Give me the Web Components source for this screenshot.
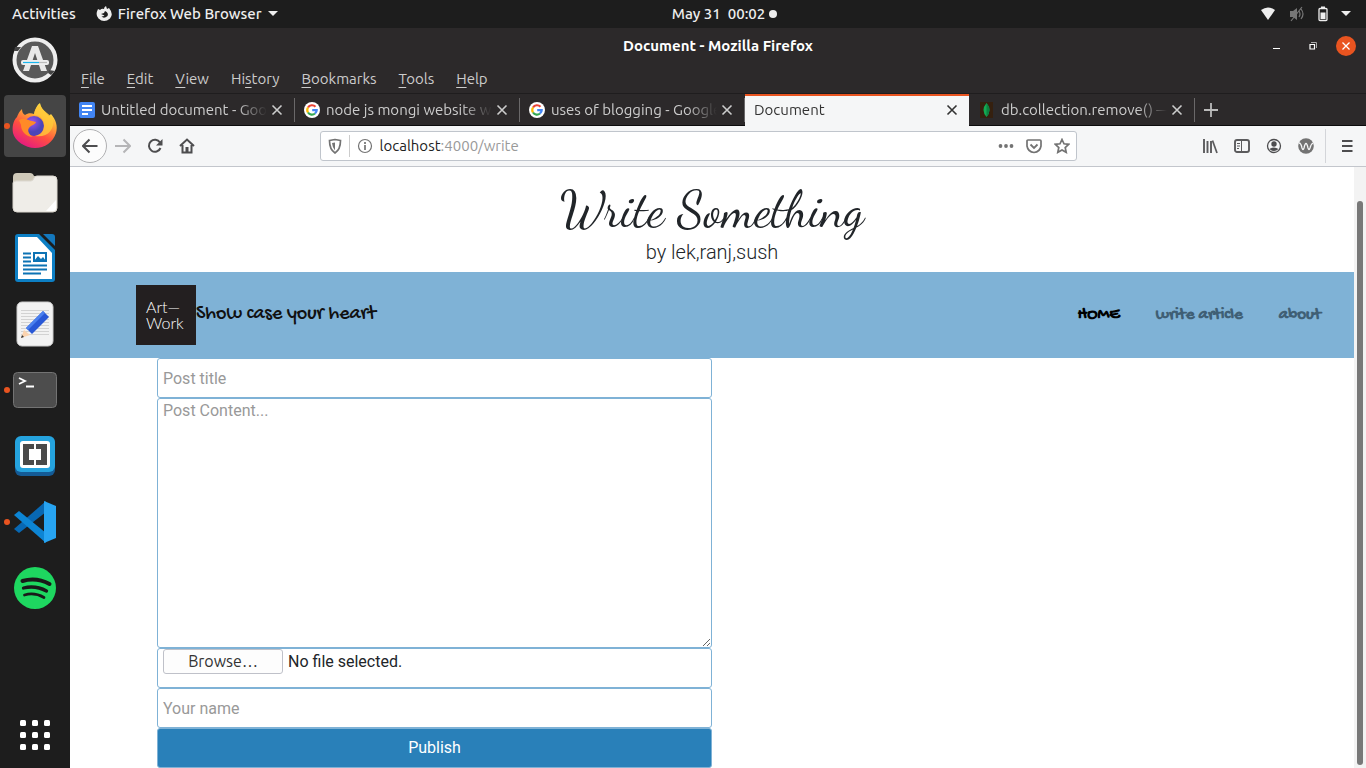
<!DOCTYPE html>
<html lang="en">
<head>
<meta charset="utf-8">
<meta name="viewport" content="width=device-width, initial-scale=1">
<title>Document - Mozilla Firefox</title>
<style>
html,body{margin:0;background:#1d1d1d}
body{font-family:Ubuntu,"Noto Sans",sans-serif;font-size:15px;line-height:20px;color:#fff}
</style>
</head>
<body>
<desktop-shell>
  <top-panel slot="panel"></top-panel>
  <app-dock slot="dock">
    <dock-item label="Software Updater" icon="updater"></dock-item>
    <dock-item label="Firefox" icon="firefox" running active></dock-item>
    <dock-item label="Files" icon="files"></dock-item>
    <dock-item label="Writer" icon="writer"></dock-item>
    <dock-item label="Text Editor" icon="editor"></dock-item>
    <dock-item label="Terminal" icon="terminal" running></dock-item>
    <dock-item label="Brackets" icon="brackets"></dock-item>
    <dock-item label="Visual Studio Code" icon="vscode" running></dock-item>
    <dock-item label="Spotify" icon="spotify"></dock-item>
    <dock-item slot="end" label="Show Applications" icon="apps"></dock-item>
  </app-dock>
  <browser-window>
    <title-bar slot="chrome">Document - Mozilla Firefox</title-bar>
    <menu-bar slot="chrome"></menu-bar>
    <tab-strip slot="chrome">
      <browser-tab icon="docs">Untitled document - Goog</browser-tab>
      <browser-tab icon="google">node js mongi website wi</browser-tab>
      <browser-tab icon="google">uses of blogging - Google</browser-tab>
      <browser-tab active>Document</browser-tab>
      <browser-tab icon="mongo">db.collection.remove() —</browser-tab>
    </tab-strip>
    <nav-toolbar slot="chrome"></nav-toolbar>
    <page-header>
      <span slot="title">Write Something</span>
      <span slot="byline">by lek,ranj,sush</span>
    </page-header>
    <site-nav></site-nav>
    <post-form></post-form>
  </browser-window>
</desktop-shell>

<script>
const ICONS = {
updater:[46,46,`<circle cx="23" cy="23" r="20.5" fill="#595959" stroke="#eee" stroke-width="4"/><path d="M3 10h6l-3 4H2zM37 33l6 1-4 4-3-2z" fill="#444"/><path d="M20 9h6l9 25h-6l-6-18-6 18h-6z" fill="#e8e8e8"/><rect x="9" y="23" width="28" height="5" rx="2" fill="#eee"/><path d="M11 25.500h16" stroke="#19b6ee" stroke-width="1.200"/><path d="M27 25.500h8" stroke="#bbb" stroke-width="1.200"/>`],
firefox:[48,48,`<defs><linearGradient id="f" x1=".8" y1="0" x2=".25" y2="1"><stop offset=".05" stop-color="#fff44f"/><stop offset=".35" stop-color="#ffa436"/><stop offset=".62" stop-color="#ff5040"/><stop offset="1" stop-color="#e31587"/></linearGradient><radialGradient id="p" cx=".4" cy=".3"><stop offset="0" stop-color="#a050ef"/><stop offset="1" stop-color="#4a45b8"/></radialGradient></defs><path d="M6 15c2-5 3-6 5-8 0 3 1 5 3 6 3-2 6-2 9-1 1-5 3-9 6-11 1 6 5 8 9 13l2-2c5 6 7 12 5 19-3 9-11 15-21 15S4 39 2 31c-1-6 0-12 4-16z" fill="url(#f)"/><circle cx="23" cy="24" r="10" fill="url(#p)"/><path d="M8 18c5-3 9 0 13 1l4 1c-1 3-5 3-7 6-2 2 0 7 4 9-7 0-12-6-12-12z" fill="#ff8a27"/><path d="M29 2c-4 3-6 7-6 11 6 0 10 4 10 10 0 7-4 10-9 11 12 2 20-6 18-17-2-5-12-8-13-15z" fill="#ffc93a" opacity=".8"/>`],
files:[46,42,`<path d="M1 6a4 4 0 0 1 4-4h13q3 0 4 3h19q4 0 4 4v20H1z" fill="#cfc9b9"/><path d="M1 12q0-2 3-2h15q2 0 3-3 1-2 3-2h16q4 0 4 4v28q0 4-4 4H5q-4 0-4-4z" fill="#efede8" stroke="#dcd8d0"/><path d="M34 40L44 29v8q0 3-3 3z" fill="#fff"/>`],
writer:[42,50,`<path d="M4 1h21l16 16v29a3 3 0 0 1-3 3H4a3 3 0 0 1-3-3V4a3 3 0 0 1 3-3z" fill="#0d7fc4"/><path d="M4 4h19l15 16v26H4z" fill="#fff"/><path d="M29 1h9q3 0 3 3v9z" fill="#1478bd"/><path d="M9 20.500h8m-8 4h8m-8 4h8m-8 4h24m-24 4h24m-24 4h18" stroke="#0d73b4" stroke-width="2"/><path d="M20 20h12v8H20z" fill="#fff" stroke="#0d73b4" stroke-width="2"/><path d="M20 28l4-5 3 3 2-2 3 4z" fill="#0d73b4"/>`],
editor:[40,48,`<rect x="2" y="2" width="36" height="44" rx="5" fill="#f2f2f2" stroke="#ccc"/><path d="M6 10.500h28M6 13.500h28M6 16.500h28M6 19.500h28M6 22.500h28M6 25.500h28M6 28.500h28M6 31.500h28M6 34.500h28" stroke="#d2d2d2"/><path d="M6 38l3-8 6 5z" fill="#fbd3ae"/><path d="M6 38l1-3 2 2z" fill="#333"/><path d="M11 28L28 11l6 6-17 17z" fill="#2958d6"/><path d="M11 28L28 11l2 2-17 17z" fill="#4b80ee"/>`],
terminal:[46,38,`<rect x="1.500" y="1.500" width="43" height="35" rx="4" fill="#4d4d4d" stroke="#737373"/><path d="M7 7l6 3-6 3M14 15.500h8" fill="none" stroke="#fff" stroke-width="1.800"/>`],
brackets:[42,42,`<rect x="1" y="2" width="40" height="39" rx="6" fill="#145b96"/><rect x="1" y="1" width="40" height="36" rx="6" fill="#25a3de"/><rect x="6" y="6" width="30" height="27" rx="3" fill="#fff"/><path d="M9 9h11v5h-5v11h5v5H9zm13 0h11v21H22v-5h5V14h-5z" fill="#4a4a4a"/>`],
vscode:[44,44,`<path d="M1 29l5 4L33 12V1L1 29z" fill="#0868b3"/><path d="M1 15l5-4 27 22v10z" fill="#0d85d4"/><path d="M31 1l12 5v32l-12 5z" fill="#27a4f2"/>`],
spotify:[44,44,`<circle cx="22" cy="22" r="21" fill="#1ed760"/><g fill="none" stroke="#191919" stroke-linecap="round"><path d="M9.500 15q14-4 27 3" stroke-width="4"/><path d="M10.500 22q12-3 23 3" stroke-width="3.300"/><path d="M11.500 29q10-3 19.500 2.500" stroke-width="2.700"/></g>`],
apps:[30,30,[0,12,24].map(y=>[0,12,24].map(x=>`<rect x="${x}" y="${y}" width="6" height="6" rx="1.500" fill="#fff"/>`).join('')).join('')],
fox:[16,16,`<path d="M2 3l2 1q2-2 4-1 0-2 2-3l1 3 2-1q5 6 1 10.500-6 5-11.500 0Q-1 9 2 3z" fill="#eee"/><path d="M5 8l3-1 1-2q4 2 2.500 5Q8 13 5.500 10.500q2 0 3-1z" fill="#1d1d1d"/>`],
caret:[10,6,`<path d="M0 0h10L5 5z" fill="#eee"/>`],
wifi:[16,14,`<path d="M1 3q7-5 14 0L8 13z" fill="#eee"/>`],
mute:[16,16,`<path d="M1 5h3l4-3v12l-4-3H1z" fill="#777"/><path d="M10 5q2 3 0 6m2-8q4 5 0 10M2 15L13 1" fill="none" stroke="#777" stroke-width="1.200"/>`],
battery:[10,16,`<rect x="1" y="2.500" width="8" height="12" rx="1" fill="none" stroke="#eee" stroke-width="1.300"/><path d="M3 .500h4v2H3zM2.500 6.500h5V13h-5z" fill="#eee"/>`],
min:[8,8,`<path d="M0 6.500h7" stroke="#fff"/>`],
restore:[8,8,`<path d="M1 2.500h4.500V7H1z" fill="none" stroke="#fff" stroke-width="1.200"/><path d="M2 .500h5.500V6" fill="none" stroke="#aaa"/>`],
x:[16,16,`<path d="M3.500 3.500l9 9m0-9l-9 9" stroke="currentColor" stroke-width="1.600"/>`],
closewin:[10,10,`<path d="M1.500 1.500l7 7m0-7l-7 7" stroke="#fff" stroke-width="1.300"/>`],
plus:[16,16,`<path d="M8 1v14M1 8h14" stroke="#bbb" stroke-width="1.800"/>`],
docs:[16,16,`<rect width="16" height="16" rx="2" fill="#4285f4"/><path d="M3 4h10M3 8h10M3 12h6" stroke="#fff" stroke-width="1.800"/>`],
google:[16,16,`<circle cx="8" cy="8" r="8" fill="#fff"/><g fill="none" stroke-width="2.200"><path d="M4 5.500A4.700 4.700 0 0 1 11.500 4.800" stroke="#ea4335"/><path d="M4 10.500a4.700 4.700 0 0 1 0-5" stroke="#fbbc05"/><path d="M4 10.500a4.700 4.700 0 0 0 7 1" stroke="#34a853"/><path d="M11 11.500q1.700-1.500 1.700-3.300H8.200" stroke="#4285f4"/></g>`],
mongo:[16,16,`<path d="M1 0h13v16H1z" fill="#35200f"/><path d="M7.500 1q6 7 0 14-6-7 0-14z" fill="#13aa52"/><path d="M7.500 1q6 7 0 14z" fill="#0d8040"/>`],
back:[16,16,`<path d="M15.500 8H1m6.500-6.500L1 8l6.500 6.500" fill="none" stroke="#4d4d4f" stroke-width="2"/>`],
fwd:[16,16,`<path d="M0 8h15M8.500 1.500L15 8l-6.500 6.500" fill="none" stroke="#b5b5b7" stroke-width="2"/>`],
reload:[16,16,`<path d="M13 4.500A6 6 0 1 0 13.500 10" fill="none" stroke="#4d4d4f" stroke-width="2"/><path d="M15.500 1v6.500H9z" fill="#4d4d4f"/>`],
home:[16,16,`<path d="M1 8l7-6.500L15 8M3.500 7v7.500h9V7" fill="none" stroke="#4d4d4f" stroke-width="2"/><path d="M6.500 9h3v5.500h-3z" fill="#4d4d4f"/>`],
shield:[16,16,`<path d="M8 1.500q3 .500 5.500 1 0 9-5.500 12.500-5.500-3.500-5.500-12.500Q5 2 8 1.500z" fill="none" stroke="#737373" stroke-width="1.700"/><path d="M8 4.500v8Q5.500 10 5 5z" fill="#737373"/>`],
info:[16,16,`<circle cx="8" cy="8" r="6.500" fill="none" stroke="#737373" stroke-width="1.200"/><path d="M8 4v2m0 1v5" stroke="#737373" stroke-width="1.700"/>`],
dots:[16,16,`<g fill="#737373"><circle cx="2.500" cy="8" r="1.900"/><circle cx="8" cy="8" r="1.900"/><circle cx="13.500" cy="8" r="1.900"/></g>`],
pocket:[16,16,`<path d="M2 2h12q1 0 1 1v5q-1 6-7 6.500Q2 14 1 8V3q0-1 1-1z" fill="none" stroke="#737373" stroke-width="1.700"/><path d="M4.500 6.500L8 10l3.500-3.500" fill="none" stroke="#737373" stroke-width="1.800"/>`],
star:[16,16,`<path d="M8 1.500l2 4.300 4.700.500-3.500 3.200 1 4.800L8 12l-4.200 2.300 1-4.800L1.300 6.300 6 5.800z" fill="none" stroke="#737373" stroke-width="1.700"/>`],
library:[16,16,`<path d="M2 1v14M5.500 3v12M9 3v12" stroke="#5b5b5d" stroke-width="1.900"/><path d="M10.500 2.500L15 15" stroke="#5b5b5d" stroke-width="1.700"/>`],
sidebar:[16,16,`<rect x="1" y="2" width="14" height="12" rx="2" fill="none" stroke="#5b5b5d" stroke-width="1.900"/><path d="M7.500 2v12M3 5.500h3M3 8h3M3 10.500h2" stroke="#5b5b5d"/>`],
account:[16,16,`<circle cx="8" cy="8" r="6.500" fill="none" stroke="#4d4d4f" stroke-width="1.300"/><circle cx="8" cy="6" r="2.700" fill="#4d4d4f"/><path d="M3.500 11q4.500-3 9 0-4.500 4-9 0z" fill="#4d4d4f"/>`],
wave:[16,16,`<circle cx="8" cy="8" r="7.800" fill="#737373"/><path d="M1 5q2 0 3 5 1 3 2 0 2-9 4 0 1 3 2 0 1-4 3-5" fill="none" stroke="#f5f6f7" stroke-width="1.300"/>`],
menu:[16,16,`<path d="M3 3h10.500M3 8h10.500M3 13h10.500" stroke="#4d4d4f" stroke-width="1.800"/>`]
};
const icon = n => { const [w,h,b]=ICONS[n]; return `<svg width="${w}" height="${h}" viewBox="0 0 ${w} ${h}" aria-hidden="true">${b}</svg>`; };
const BASE = `:host,*{box-sizing:border-box}svg{display:block;flex:none}button{font:inherit;color:inherit;border:0;background:none;padding:0;margin:0;display:flex;align-items:center;justify-content:center}`;
function define(name, css, html){
  customElements.define(name, class extends HTMLElement{
    constructor(){
      super();
      const root=this.attachShadow({mode:'open'});
      root.innerHTML=`<style>${BASE}${css}</style>${typeof html==='function'?html(this):html}`;
    }
  });
}

define('desktop-shell',`
:host{display:grid;grid-template-columns:70px minmax(0,1fr);grid-template-rows:28px 1fr;min-height:100vh;background:#1d1d1d}
slot[name=panel]::slotted(*){grid-column:1/-1}`,
`<slot name="panel"></slot><slot name="dock"></slot><slot></slot>`);

define('top-panel',`
:host{display:flex;align-items:center;padding:0 15px 0 12px;color:#eee;font-weight:500}
.side{display:flex;align-items:center;flex:1}
.right{justify-content:flex-end;gap:13px}
.app{margin-left:20px;gap:6px}
.clock{margin-left:86px;gap:4px;white-space:pre}
i{width:8px;height:8px;border-radius:50%;background:#eee}`,
`<div class="side"><button>Activities</button><button class="app">${icon('fox')}Firefox Web Browser${icon('caret')}</button></div>
<button class="clock">May 31  00:02<i></i></button>
<div class="side right">${icon('wifi')}${icon('mute')}${icon('battery')}${icon('caret')}</div>`);

define('app-dock',`:host{display:flex;flex-direction:column;align-items:center;gap:4px;padding:1px 0 2px}
.gap{flex:1}`,`<slot></slot><div class="gap"></div><slot name="end"></slot>`);

define('dock-item',`
:host{display:block;position:relative;width:62px;height:62px;flex:none}
button{width:100%;height:100%;border-radius:4px}
:host([active]) button{background:#454545}
:host([running])::before{content:"";position:absolute;left:0;top:28px;width:6px;height:6px;border-radius:50%;background:#e95420}`,
e=>`<button aria-label="${e.getAttribute('label')}">${icon(e.getAttribute('icon'))}</button>`);

define('browser-window',`
:host{display:flex;flex-direction:column;background:#fff;min-width:0}
.view{flex:1;display:grid;grid-template-columns:minmax(0,1fr) 12px;color:#212529}
.bar{background:#f3f3f3;display:flex;flex-direction:column;padding:34px 3px 3px}
.thumb{flex:1;border-radius:3px;background:#787878}`,
`<slot name="chrome"></slot><div class="view"><main><slot></slot></main><div class="bar"><div class="thumb"></div></div></div>`);

define('title-bar',`
:host{display:grid;grid-template-columns:1fr auto 1fr;align-items:center;height:36px;background:#2c292a;font-weight:700}
h1{font:inherit;margin:0;grid-column:2}
.b{display:flex;justify-content:flex-end;align-items:center;gap:10px;padding-right:10px}
button{width:26px;height:20px}
button.c{width:20px;border-radius:50%;background:#e95420}`,
`<h1><slot></slot></h1><div class="b"><button aria-label="Minimize">${icon('min')}</button><button aria-label="Restore">${icon('restore')}</button><button class="c" aria-label="Close">${icon('closewin')}</button></div>`);

define('menu-bar',`
:host{display:flex;height:30px;background:#2c292a;border-bottom:1px solid #1f1d1e;color:#ccc;gap:22px;padding:0 11px}
u{text-underline-offset:3px}`,
['File','Edit','View','Hi_story','Bookmarks','Tools','Help'].map(t=>{
 const p=t.indexOf('_'); return p<0?`<button><span><u>${t[0]}</u>${t.slice(1)}</span></button>`:`<button><span>${t.slice(0,p)}<u>${t[p+1]}</u>${t.slice(p+2)}</span></button>`;}).join(''));

define('tab-strip',`
:host{display:flex;height:32px;background:#2c292a;border-bottom:1px solid #0c0c0d}
.tabs{display:flex;flex:0 1 1125px;min-width:0}
button{width:32px;flex:none}`,
`<div class="tabs"><slot></slot></div><button aria-label="New tab">${icon('plus')}</button>`);

define('browser-tab',`
:host{display:flex;flex:1;min-width:0;align-items:center;gap:6px;padding:0 10px 0 9px;color:#ccc;
 background:linear-gradient(#6a6869,#6a6869) 100% 4px/1px 24px no-repeat}
:host([active]){background:#f5f6f7;color:#333;border-top:2px solid #e95420;margin:0 1px -1px 0;padding:0 9px 2px}
.t{flex:1;white-space:nowrap;overflow:hidden;-webkit-mask:linear-gradient(to left,transparent,#000 30px);mask:linear-gradient(to left,transparent,#000 30px)}
button{margin-left:-4px}`,
e=>`${e.hasAttribute('icon')?icon(e.getAttribute('icon')):''}<span class="t"><slot></slot></span><button aria-label="Close tab">${icon('x')}</button>`);

define('nav-toolbar',`
:host{display:flex;align-items:center;height:41px;padding:0 3px;background:#f5f6f7;border-bottom:1px solid #c3c6cc;color:#333}
button{width:32px;height:32px;flex:none}
.back{width:34px;height:34px;border:1px solid #b0b0b2;border-radius:50%;background:#fcfcfc}
.sp{flex:117 1 0}
.url{flex:753 1 0;display:flex;align-items:center;height:30px;border:1px solid #c0c5cc;border-radius:3px;background:#fff;padding:0 0 0 6px;min-width:0}
.url button{width:28px;height:28px}
.url .s{width:16px}
.url .i{width:31px;border-left:1px solid #ccc;margin-left:6px;height:22px}
.addr{position:relative;flex:1;display:grid;min-width:0}
.addr>*{grid-area:1/1;font:inherit;line-height:22px;padding:0;margin:0;border:0}
input{color:transparent;background:none;caret-color:#333;outline:0;min-width:0}
.addr span{color:#999;pointer-events:none}b{font-weight:400;color:#222}
.sep{width:1px;height:34px;background:#d3d5d9;margin:0 5px 0 3px}`,
`<button class="back" aria-label="Back">${icon('back')}</button><button aria-label="Forward">${icon('fwd')}</button><button aria-label="Reload">${icon('reload')}</button><button aria-label="Home">${icon('home')}</button>
<div class="sp"></div><div class="url"><button class="s" aria-label="Protection">${icon('shield')}</button><button class="i" aria-label="Site information">${icon('info')}</button>
<div class="addr"><input aria-label="Address"><span><b>localhost</b>:4000/write</span></div>
<button aria-label="Page actions">${icon('dots')}</button><button aria-label="Save to Pocket">${icon('pocket')}</button><button aria-label="Bookmark">${icon('star')}</button></div><div class="sp"></div>
<button aria-label="Library">${icon('library')}</button><button aria-label="Sidebars">${icon('sidebar')}</button><button aria-label="Account">${icon('account')}</button><button aria-label="Extension">${icon('wave')}</button><div class="sep"></div><button aria-label="Menu">${icon('menu')}</button>`);

define('page-header',`
:host{display:block;text-align:center;padding:16px 0 5px}
h1{font:400 50px/54px "Dancing Script","Liberation Serif",serif;margin:0}
p{font:300 20px/30px Roboto,sans-serif;margin:0}`,
`<h1><slot name="title"></slot></h1><p><slot name="byline"></slot></p>`);

define('site-nav',`
:host{display:flex;align-items:center;justify-content:space-between;background:#7fb2d6;height:86px;padding:0 33px 0 66px;font:700 17px/24px "Gochi Hand",Lato,sans-serif}
a{color:#3f5f75;text-decoration:none}
.brand{display:flex;align-items:center;color:#111;font-size:20px;font-weight:400}
.logo{width:60px;height:60px;background:#231f20;color:#fff;font:300 16px/16px Lato,sans-serif;padding:14px 0 0 10px}
nav{display:flex;gap:36px}.on{color:#000}`,
`<a class="brand" href="#"><span class="logo">Art—<br>Work</span><span>Show case your heart</span></a><nav><a class="on" href="#">HOME</a><a href="#">write article</a><a href="#">about</a></nav>`);

define('post-form',`
:host{display:block;max-width:1140px;margin:0 auto;padding:0 15px}
form{width:50%;display:flex;flex-direction:column}
.f{display:block;width:100%;height:40px;border:1px solid #7fb2d6;border-radius:3px;background:#fff;padding:0 5px;margin:0;font:400 16px/24px Roboto,sans-serif;color:#212529;outline:0}
::placeholder{color:#999;opacity:1}
textarea.f{height:250px;resize:vertical}
.file{position:relative}
.file input{position:absolute;inset:0;width:100%;opacity:0}
.row{display:flex;align-items:center;gap:5px}
.browse{width:120px;height:25px;border:1px solid #bfc1c9;border-radius:3px;background:#fdfdfd;font:16px/22px Ubuntu,"Noto Sans",sans-serif;text-align:center;color:#333}
button.f{background:#2980b9;color:#fff;display:block;text-align:center}`,
`<form onsubmit="return false"><input class="f" type="text" placeholder="Post title" aria-label="Post title">
<textarea class="f" placeholder="Post Content..." aria-label="Post content"></textarea>
<label class="f file"><span class="row"><span class="browse">Browse…</span><span>No file selected.</span></span><input type="file" aria-label="Attachment"></label>
<input class="f" type="text" placeholder="Your name" aria-label="Your name"><button class="f" type="submit">Publish</button></form>`);
</script>
</body>
</html>
